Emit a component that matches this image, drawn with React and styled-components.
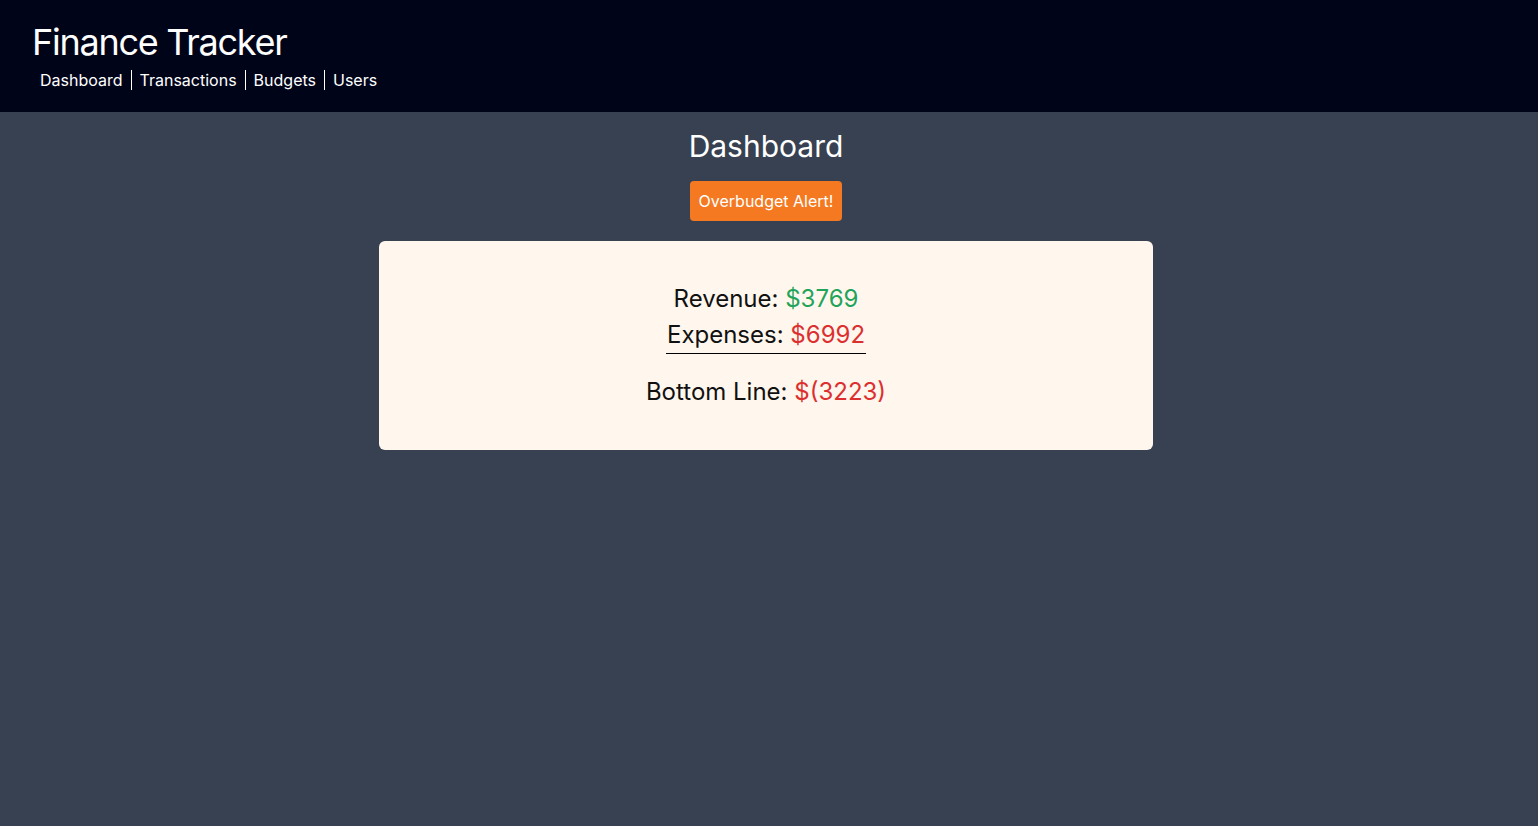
import React from "react";
import styled, { createGlobalStyle } from "styled-components";

const GlobalStyle = createGlobalStyle`
  html, body {
    margin: 0;
    padding: 0;
    background: #374151;
    font-family: Inter, "Liberation Sans", sans-serif;
  }
  body {
    min-height: 826px;
  }
`;

const Page = styled.div`
  min-height: 826px;
  background: #374151;
`;

const Header = styled.header`
  background: #000419;
  color: #ffffff;
  padding: 22px 32px 20px;
  height: 112px;
  box-sizing: border-box;
`;

const Brand = styled.h1`
  margin: 0;
  font-size: 36px;
  line-height: 40px;
  font-weight: 400;
  letter-spacing: -0.035em;
`;

const Nav = styled.nav`
  display: flex;
  margin-top: 6px;
`;

const NavLink = styled.a`
  color: #ffffff;
  text-decoration: none;
  font-size: 16px;
  line-height: 20px;
  padding: 0 8px;
  margin: 2px 0;
  border-left: ${(p) => (p.$first ? "none" : "1px solid #ffffff")};
`;

const Main = styled.main`
  display: flex;
  flex-direction: column;
  align-items: center;
  padding-top: 16px;
  margin-right: 6px;
`;

const Heading = styled.h2`
  margin: 0;
  color: #ffffff;
  font-size: 30px;
  line-height: 36px;
  font-weight: 400;
`;

const AlertButton = styled.button`
  margin-top: 17px;
  background: #f47920;
  color: #ffffff;
  border: none;
  border-radius: 4px;
  font-family: inherit;
  font-size: 16px;
  line-height: 24px;
  padding: 8px 9px;
  cursor: pointer;
`;

const Card = styled.section`
  margin-top: 20px;
  width: 774px;
  box-sizing: border-box;
  background: #fff7ed;
  border-radius: 6px;
  padding: 40px 0 40px;
  display: flex;
  flex-direction: column;
  align-items: center;
`;

const Line = styled.div`
  font-size: 24px;
  line-height: 36px;
  color: #111111;
  padding: 0 1px;
  border-bottom: ${(p) => (p.$underline ? "1px solid #000000" : "none")};
  margin-top: ${(p) => (p.$spaced ? "20px" : "0")};
`;

const Amount = styled.span`
  color: ${(p) => (p.$positive ? "#1fa45a" : "#dc2f2f")};
`;

const formatMoney = (n) => (n < 0 ? `$(${Math.abs(n)})` : `$${n}`);

export default function App() {
  const revenue = 3769;
  const expenses = 6992;
  const bottom = revenue - expenses;

  return (
    <Page>
      <GlobalStyle />
      <Header>
        <Brand>Finance Tracker</Brand>
        <Nav>
          <NavLink $first href="#">Dashboard</NavLink>
          <NavLink href="#">Transactions</NavLink>
          <NavLink href="#">Budgets</NavLink>
          <NavLink href="#">Users</NavLink>
        </Nav>
      </Header>
      <Main>
        <Heading>Dashboard</Heading>
        <AlertButton>Overbudget Alert!</AlertButton>
        <Card>
          <Line>
            Revenue: <Amount $positive>{formatMoney(revenue)}</Amount>
          </Line>
          <Line $underline>
            Expenses: <Amount>{formatMoney(expenses)}</Amount>
          </Line>
          <Line $spaced>
            Bottom Line: <Amount $positive={bottom >= 0}>{formatMoney(bottom)}</Amount>
          </Line>
        </Card>
      </Main>
    </Page>
  );
}
